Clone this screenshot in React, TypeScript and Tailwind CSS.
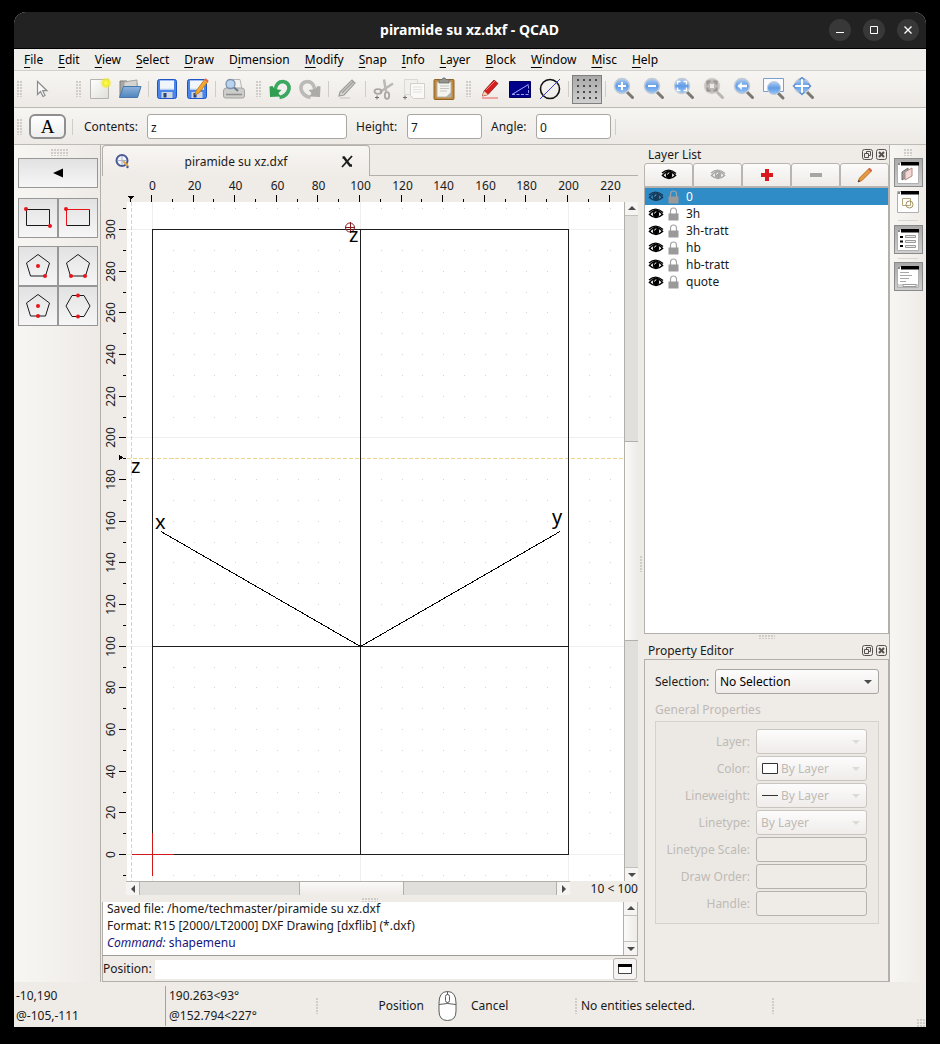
import { useState, type ReactNode } from "react";
import clsx from "clsx";

const MENUS = [
  ["", "F", "ile"],
  ["", "E", "dit"],
  ["", "V", "iew"],
  ["", "S", "elect"],
  ["", "D", "raw"],
  ["D", "i", "mension"],
  ["", "M", "odify"],
  ["", "S", "nap"],
  ["", "I", "nfo"],
  ["", "L", "ayer"],
  ["", "B", "lock"],
  ["", "W", "indow"],
  ["", "M", "isc"],
  ["", "H", "elp"],
];

const LAYERS = ["0", "3h", "3h-tratt", "hb", "hb-tratt", "quote"];

// Drawing units to pixels inside the canvas
const toX = (u: number) => Math.round(25 + u * 2.08) + 0.5;
const toY = (v: number) => Math.round(652 - v * 2.0833) + 0.5;

const range = (from: number, to: number, step: number) => {
  const out: number[] = [];
  for (let i = from; i <= to; i += step) out.push(i);
  return out;
};

export default function App() {
  return (
    <div className="flex h-screen min-h-[800px] min-w-[900px] flex-col bg-black px-3.5 pt-3 pb-[17px] font-['Noto_Sans',sans-serif] text-xs text-[#1a1a1a]">
      <Defs />
      <div className="flex min-h-0 flex-1 flex-col overflow-hidden rounded-t-xl bg-[#efebe7]">
        <TitleBar />
        <nav className="flex h-[22px] shrink-0 items-center border-b border-[#d3cfca] bg-[#f0eeea] pl-0.5">
          {MENUS.map(([pre, key, post]) => (
            <button key={pre + key + post} className="pr-[7px] pl-2 leading-5 text-black">
              {pre}
              <span className="underline underline-offset-3">{key}</span>
              {post}
            </button>
          ))}
        </nav>
        <MainToolbar />
        <OptionsToolbar />
        <div className="flex min-h-0 flex-1">
          <ToolPanel />
          <main className="flex min-w-0 flex-1 flex-col">
            <DocumentTabs />
            <DrawingArea />
            <CommandLine />
          </main>
          <div className="flex w-1.5 items-center justify-center">
            <Dots className="h-4 w-[2px]" />
          </div>
          <aside className="flex w-[245px] shrink-0 flex-col">
            <LayerList />
            <div className="flex h-[7px] shrink-0 justify-center pt-px">
              <Dots className="h-1 w-4" />
            </div>
            <PropertyEditor />
          </aside>
          <DockBar />
        </div>
        <StatusBar />
      </div>
    </div>
  );
}

function Dots({ className }: { className: string }) {
  return (
    <span
      className={clsx(
        "block bg-[radial-gradient(circle_at_1px_1px,#d0ccc7_1px,transparent_1px)] bg-[size:3px_3px]",
        className
      )}
    />
  );
}

function Handle({ first }: { first?: boolean }) {
  return (
    <span className={clsx("flex shrink-0 justify-end pr-1", first ? "w-3" : "w-4")}>
      <Dots className="h-4 w-[5px]" />
    </span>
  );
}

function Separator() {
  return (
    <span className="flex w-[7px] shrink-0 justify-center">
      <span className="h-4 w-px bg-[#d0ccc7]" />
    </span>
  );
}

function TitleBar() {
  const round = "flex h-[22px] w-[22px] items-center justify-center rounded-full bg-[#383838]";
  return (
    <header className="grid h-[37px] shrink-0 grid-cols-[1fr_auto_1fr] items-center border-b border-black bg-[#222222] pr-[7px] pl-1.5 text-white">
      <span />
      <h1 className="text-sm font-bold">piramide su xz.dxf - QCAD</h1>
      <div className="flex justify-end gap-3">
        <button aria-label="Minimize" className={round}>
          <svg width="10" height="10" stroke="white" fill="none">
            <path d="M1 7.500h8" />
          </svg>
        </button>
        <button aria-label="Maximize" className={round}>
          <svg width="10" height="10" stroke="white" fill="none">
            <path d="M1.500 1.500h7v7h-7z" />
          </svg>
        </button>
        <button aria-label="Close" className={round}>
          <svg width="10" height="10" stroke="white" strokeWidth="1.300" fill="none">
            <path d="M1.500 1.500l7 7M8.500 1.500l-7 7" />
          </svg>
        </button>
      </div>
    </header>
  );
}

// Gradients shared by the toolbar icons
function Defs() {
  return (
    <svg width="0" height="0" className="absolute">
      <defs>
        <linearGradient id="lens" x1="0" y1="0" x2="0" y2="1">
          <stop offset="0" stopColor="#b4d0f2" />
          <stop offset="0.5" stopColor="#5f9be6" />
          <stop offset="1" stopColor="#9cc6f5" />
        </linearGradient>
        <linearGradient id="folder" x1="0" y1="0" x2="0" y2="1">
          <stop offset="0" stopColor="#8fb4dc" />
          <stop offset="1" stopColor="#4f84bd" />
        </linearGradient>
        <radialGradient id="glow">
          <stop offset="0" stopColor="#ffff66" />
          <stop offset="0.5" stopColor="#f2ea2c" />
          <stop offset="1" stopColor="#f2ea2c" stopOpacity="0" />
        </radialGradient>
        <linearGradient id="paper" x1="0" y1="0" x2="1" y2="1">
          <stop offset="0" stopColor="#ffffff" />
          <stop offset="1" stopColor="#dededa" />
        </linearGradient>
      </defs>
    </svg>
  );
}

function ToolButton({
  label,
  active,
  children,
}: {
  label: string;
  active?: boolean;
  children: ReactNode;
}) {
  return (
    <button
      title={label}
      aria-label={label}
      className={clsx(
        "flex h-[29px] w-[30px] shrink-0 items-center justify-center",
        active && "border border-[#7f7f7f] bg-linear-to-b from-[#a9a9a9] to-[#cfcfcf]"
      )}
    >
      <svg width="24" height="24" viewBox="0 0 24 24" fill="none">
        {children}
      </svg>
    </button>
  );
}

function Lens({ grey, children }: { grey?: boolean; children?: ReactNode }) {
  return (
    <>
      <path d="M15 15l5.500 5.500" stroke={grey ? "#b9b6b2" : "#7b7872"} strokeWidth="3" strokeLinecap="round" />
      <circle cx="10" cy="9" r="7.500" fill={grey ? "#bdbab6" : "url(#lens)"} stroke={grey ? "#d4d1cd" : "#c3cbd6"} strokeWidth="1.500" />
      <g stroke={grey ? "#eceae7" : "white"} strokeWidth="2">
        {children}
      </g>
    </>
  );
}

function Floppy() {
  return (
    <>
      <rect x="2.500" y="2.500" width="19" height="19" rx="2" fill="#4a86ea" stroke="#1f55c4" />
      <rect x="5" y="3.500" width="14" height="9" fill="#f1f5fc" />
      <path d="M5 12h14" stroke="#cfdcf2" />
      <rect x="6.500" y="15" width="11" height="6" fill="#cfd4de" />
      <rect x="8.500" y="16" width="3" height="4.500" fill="#27437e" />
    </>
  );
}

function MainToolbar() {
  return (
    <div className="flex h-[37px] shrink-0 items-center border-b border-[#bdb9b4] bg-linear-to-b from-[#f7f5f2] to-[#edeae6]">
      <Handle first />
      <ToolButton label="Reset">
        <path d="M8.500 4.500v13l3-3 2.500 5 2-1-2.300-4.800h4.300z" fill="#fbfbfb" stroke="#8c8c8c" strokeWidth="1.200" />
      </ToolButton>
      <span className="w-[13px] shrink-0" />
      <Handle />
      <ToolButton label="New">
        <path d="M2.500 2.500h18v19h-18z" fill="url(#paper)" stroke="#b4b4ac" />
        <circle cx="18" cy="6" r="6" fill="url(#glow)" />
      </ToolButton>
      <ToolButton label="Open">
        <path d="M2 20V4h7l2 2h8v14z" fill="#a7a7a3" stroke="#7e7e7a" />
        <path d="M6 5l13-2v8H6z" fill="#d4d4d0" stroke="#a3a39f" />
        <path d="M1.500 20.500L5.500 9.500h17.500l-3.500 11z" fill="url(#folder)" stroke="#4477ad" />
      </ToolButton>
      <Separator />
      <ToolButton label="Save">
        <Floppy />
      </ToolButton>
      <ToolButton label="Save as">
        <Floppy />
        <path d="M11 14l9-12 3 2.500-9 11.500-4 2z" fill="#f6a82c" stroke="#b8741a" strokeWidth="0.800" />
        <path d="M20 2l3 2.500" stroke="#e26a5a" strokeWidth="2" />
      </ToolButton>
      <Separator />
      <ToolButton label="Print preview">
        <path d="M6 2.500h12l2 10H4z" fill="#f1f1ef" stroke="#b5b5b2" />
        <path d="M1.500 14q0-3 3-3h15q3 0 3 3v5q0 2-2 2h-17q-2 0-2-2z" fill="#cdcdcb" stroke="#a2a29f" />
        <path d="M4 17.500h16" stroke="#8e8e8b" strokeWidth="1.500" />
        <circle cx="8.500" cy="7" r="4.500" fill="#b9d3ef" stroke="#7a92b0" strokeWidth="1.300" />
        <path d="M12 10.500l4 3.500" stroke="#6c7c90" strokeWidth="2" />
      </ToolButton>
      <Handle />
      <ToolButton label="Undo">
        <path d="M7 13Q8.500 4.500 15 4.500q6.500 1 6 7.500-1.500 7-9.500 8.500" stroke="#3aa860" strokeWidth="3.600" />
        <path d="M1.500 9.500l3-0.500 2 3 7 1-3 3 2 3.500-10.500 0.500z" fill="#2f9e51" />
      </ToolButton>
      <ToolButton label="Redo">
        <path d="M17 13Q15.500 4.500 9 4.500q-6.500 1-6 7.500 1.500 7 9.500 8.500" stroke="#bcbab7" strokeWidth="3.600" />
        <path d="M22.500 9.500l-3-0.500-2 3-7 1 3 3-2 3.500 10.500 0.500z" fill="#adaba8" />
      </ToolButton>
      <Separator />
      <ToolButton label="Erase">
        <path d="M5 15L17 3l3 3L9 18l-5 1z" fill="#d8d6d3" stroke="#9f9d9a" strokeWidth="1.200" />
        <path d="M7 16L18.500 4.500" stroke="#9f9d9a" strokeWidth="1.500" />
        <path d="M5 21h10" stroke="#dad7d3" strokeWidth="2" />
      </ToolButton>
      <Separator />
      <ToolButton label="Cut">
        <path d="M12 2.500l2 12M21 6.500L8 15" stroke="#bcb9b5" strokeWidth="2.500" />
        <ellipse cx="6" cy="14.500" rx="3.500" ry="2.300" stroke="#aaa7a3" strokeWidth="1.800" />
        <ellipse cx="15" cy="18.500" rx="2.200" ry="3.300" stroke="#aaa7a3" strokeWidth="1.800" />
        <path d="M3 20.500h4M5 18.500v4" stroke="#6f6f6f" />
      </ToolButton>
      <ToolButton label="Copy">
        <path d="M2.500 2.500h13v15h-13z" fill="#f2f0ed" stroke="#dcd9d5" />
        <path d="M8.500 6.500h14v15h-11l-3-3z" fill="#faf9f7" stroke="#d3d0cc" />
        <path d="M11 10h9M11 12.500h9M11 15h9" stroke="#e4e1de" />
        <path d="M1 20.500h4M3 18.500v4" stroke="#6f6f6f" />
      </ToolButton>
      <ToolButton label="Paste">
        <rect x="2" y="2.500" width="20" height="20" rx="1" fill="#bf8a3f" stroke="#8f6424" />
        <path d="M5 5h14v15H5z" fill="#f3f3f0" stroke="#b8b8b0" />
        <path d="M8 9h9M8 11.500h9M8 14h7" stroke="#c5c5c0" />
        <path d="M14 20l5-5v5z" fill="#b0b0aa" />
        <path d="M7 2.500h3l1-1.500h2l1 1.500h3V6H7z" fill="#93938e" stroke="#6d6d68" strokeWidth="0.800" />
      </ToolButton>
      <Handle />
      <ToolButton label="Draft mode">
        <path d="M6 14L16 3l4 3.500L10 17.500 4.500 19z" fill="#d61f1f" stroke="#8e1414" strokeWidth="0.800" />
        <path d="M6 14l4 3.500L4.500 19z" fill="#f0d6b0" />
        <path d="M8 13L17 4" stroke="#ff7a70" />
        <path d="M4 21h16" stroke="#f08a8a" strokeWidth="1.500" />
      </ToolButton>
      <ToolButton label="Screen linetypes">
        <path d="M1.500 4.500h21v16h-21z" fill="#00008b" stroke="#000060" />
        <path d="M4 17.500h16.500v-10zM4 17.500L20.500 7.500" stroke="#9c9cf5" strokeDasharray="3 1.500" />
      </ToolButton>
      <ToolButton label="Antialiasing">
        <circle cx="12" cy="12" r="9.500" stroke="#111111" strokeWidth="1.600" />
        <path d="M2 22L22 2" stroke="#3a3ad0" />
      </ToolButton>
      <Separator />
      <ToolButton label="Grid" active>
        {range(2, 20, 6).map((x) =>
          range(2, 20, 6).map((y) => (
            <rect key={x + "-" + y} x={x} y={y} width="2" height="2" fill="#4a4a4a" />
          ))
        )}
      </ToolButton>
      <Separator />
      <ToolButton label="Zoom in">
        <Lens>
          <path d="M6 9h8M10 5v8" />
        </Lens>
      </ToolButton>
      <ToolButton label="Zoom out">
        <Lens>
          <path d="M6 9h8" />
        </Lens>
      </ToolButton>
      <ToolButton label="Auto zoom">
        <Lens>
          <path d="M5.500 7.500v-3h3M11.500 4.500h3v3M14.500 10.500v3h-3M8.500 13.500h-3v-3" strokeWidth="1.500" />
        </Lens>
      </ToolButton>
      <ToolButton label="Zoom to selection">
        <Lens grey>
          <path d="M5.500 7.500v-3h3M11.500 4.500h3v3M14.500 10.500v3h-3M8.500 13.500h-3v-3" stroke="#97948f" />
          <path d="M8 9h4" strokeWidth="4" />
        </Lens>
      </ToolButton>
      <ToolButton label="Previous view">
        <Lens>
          <path d="M9 9h6" strokeWidth="2.500" />
          <path d="M9.500 5.500v7L5.500 9z" fill="white" strokeWidth="0.500" />
        </Lens>
      </ToolButton>
      <ToolButton label="Window zoom">
        <path d="M1.500 1.500h20v13h-20z" fill="#fbfbfd" stroke="#7c9ed0" />
        <path d="M16 16l5 5" stroke="#7b7872" strokeWidth="3" strokeLinecap="round" />
        <circle cx="12" cy="11" r="6.500" fill="url(#lens)" stroke="#c3cbd6" />
      </ToolButton>
      <ToolButton label="Pan">
        <Lens>
          <path d="M3 9h14M10 2v14" strokeWidth="2" />
          <path d="M7.500 3L10 0.500 12.500 3M7.500 15l2.500 2.500 2.500-2.500M4 6.500L1.500 9 4 11.500M16 6.500L18.500 9 16 11.500" stroke="#5e8fd6" strokeWidth="1.500" />
        </Lens>
      </ToolButton>
    </div>
  );
}

function OptionsToolbar() {
  const field = "h-[25px] rounded-[3px] border border-[#a9a5a0] bg-white px-[3px] pt-px text-xs";
  return (
    <div className="flex h-[37px] shrink-0 items-center border-b border-[#bdb9b4] bg-linear-to-b from-[#f7f5f2] to-[#edeae6] pt-px">
      <Handle first />
      <button
        aria-label="Text"
        className="ml-[3px] h-[25px] w-[37px] rounded-md border-2 border-[#8f8f8f] bg-linear-to-b from-white to-[#eeeeee] font-['Liberation_Serif',serif] text-[19px] leading-5 text-black"
      >
        A
      </button>
      <span className="mx-1.5 h-4 w-px bg-[#d0ccc7]" />
      <label htmlFor="contents" className="ml-[5px] w-[63px]">
        Contents:
      </label>
      <input id="contents" defaultValue="z" className={clsx(field, "w-[200px]")} />
      <label htmlFor="height" className="ml-[9px] w-[51px]">
        Height:
      </label>
      <input id="height" defaultValue="7" className={clsx(field, "w-[75px]")} />
      <label htmlFor="angle" className="ml-[9px] w-[45px]">
        Angle:
      </label>
      <input id="angle" defaultValue="0" className={clsx(field, "w-[75px]")} />
      <span className="ml-1 h-4 w-px bg-[#d0ccc7]" />
    </div>
  );
}

function ShapeButton({ label, children }: { label: string; children: ReactNode }) {
  return (
    <button
      title={label}
      aria-label={label}
      className="flex h-10 w-10 items-center justify-center border border-[#979797] bg-linear-to-b from-[#e2e2e2] to-[#f6f6f6]"
    >
      <svg width="32" height="32" viewBox="0 0 32 32" fill="none" stroke="#1a1a1a">
        {children}
      </svg>
    </button>
  );
}

function Red({ x, y }: { x: number; y: number }) {
  return <circle cx={x} cy={y} r="2" fill="#e8141c" stroke="none" />;
}

const PENTAGON = "M16 4.500L27.500 13l-4 13h-15l-4-13z";

function ToolPanel() {
  return (
    <aside className="flex w-[87px] shrink-0 flex-col border-r border-[#b3afaa] bg-linear-to-r from-[#f8f6f3] to-[#eeebe7] pl-1">
      <div className="flex h-[13px] justify-center pt-1">
        <Dots className="h-[7px] w-[17px]" />
      </div>
      <button
        aria-label="Back"
        className="flex h-[30px] w-20 items-center justify-center border border-[#979797] bg-linear-to-b from-[#e2e2e2] to-[#f6f6f6]"
      >
        <svg width="10" height="10" fill="black">
          <path d="M0 5l10-4.500v9z" />
        </svg>
      </button>
      <div className="mt-2.5 flex">
        <ShapeButton label="Rectangle from two corners">
          <path d="M4.500 7.500h23v16h-23z" />
          <Red x={4} y={7} />
          <Red x={28} y={24} />
        </ShapeButton>
        <ShapeButton label="Rectangle with size">
          <path d="M27.500 7.500v16h-23" />
          <path d="M4.500 23.500v-16h23" stroke="#e8141c" />
          <Red x={4} y={7} />
        </ShapeButton>
      </div>
      <div className="mt-2 grid w-20 grid-cols-2">
        <ShapeButton label="Polygon from centre and corner">
          <path d={PENTAGON} />
          <Red x={16} y={16} />
          <Red x={23} y={26} />
        </ShapeButton>
        <ShapeButton label="Polygon from two corners">
          <path d={PENTAGON} />
          <Red x={9} y={26} />
          <Red x={23} y={26} />
        </ShapeButton>
        <ShapeButton label="Polygon from centre and side">
          <path d={PENTAGON} />
          <Red x={16} y={16} />
          <Red x={16} y={26} />
        </ShapeButton>
        <ShapeButton label="Polygon from side to side">
          <path d="M10 5.500h12l6 10.500-6 10.500H10L4 16z" />
          <Red x={16} y={5.5} />
          <Red x={16} y={26.5} />
        </ShapeButton>
      </div>
    </aside>
  );
}

function DocumentTabs() {
  return (
    <div className="flex h-[31px] shrink-0 pl-px">
      <div className="flex w-[268px] items-center rounded-t-sm border border-b-0 border-[#b3afaa] bg-linear-to-b from-[#f8f6f3] to-[#efebe7] pr-4 pl-3">
        <svg width="16" height="16" fill="none">
          <circle cx="7" cy="7.500" r="5.500" fill="#f3f4fa" stroke="#4c5a94" strokeWidth="2" />
          <path d="M7 3v9M3 7.500h8" stroke="#a9b3d3" />
          <path d="M8 8l5 5" stroke="#e0a63c" strokeWidth="2" />
          <path d="M11.500 13.500l2 1" stroke="#4c5a94" strokeWidth="2" />
        </svg>
        <span className="flex-1 pt-px text-center">piramide su xz.dxf</span>
        <button aria-label="Close tab">
          <svg width="12" height="13" fill="none" stroke="#1c1c1c">
            <path d="M1.500 2.500h1.500l6 8h2" strokeWidth="2.400" />
            <path d="M11 1L1 12" strokeWidth="1.800" />
          </svg>
        </button>
      </div>
      <div className="flex-1 border-b border-[#b3afaa]" />
    </div>
  );
}

function Arrow({ dir }: { dir: "up" | "down" | "left" | "right" }) {
  const paths = {
    up: "M1 6l4-4 4 4z",
    down: "M1 3l4 4 4-4z",
    left: "M7 1L3 5l4 4z",
    right: "M3 1l4 4-4 4z",
  };
  return (
    <svg width="10" height="10" fill="#4a4a4a">
      <path d={paths[dir]} />
    </svg>
  );
}

function DrawingArea() {
  return (
    <div className="grid min-h-0 flex-1 grid-cols-[25px_1fr_14px] grid-rows-[26px_1fr_14px] pl-px">
      <svg className="col-span-3 h-full w-full" shapeRendering="crispEdges" fill="#1a1a1a">
        {range(0, 220, 20).map((u) => (
          <text key={u} x={toX(u) + 25} y="14" textAnchor="middle">
            {u}
          </text>
        ))}
        {range(-10, 220, 10).map((u) => (
          <path key={u} d={`M${toX(u) + 24} 26v${u % 20 === 0 ? -7 : -3}`} stroke="black" />
        ))}
        <path d="M26 20h6l-3 4z" fill="black" />
      </svg>

      <svg className="h-full w-full" shapeRendering="crispEdges" fill="#1a1a1a">
        {range(0, 300, 20).map((v) => (
          <text key={v} transform={`translate(13 ${toY(v)}) rotate(-90)`} textAnchor="middle">
            {v}
          </text>
        ))}
        {range(-10, 310, 10).map((v) => (
          <path key={v} d={`M24 ${toY(v)}h${v % 20 === 0 ? -7 : -3}`} stroke="black" />
        ))}
        <path d={`M17 ${toY(190) - 4}v6l4-3z`} fill="black" />
      </svg>

      <svg className="h-full w-full bg-white" fill="none">
        <g shapeRendering="crispEdges">
          {range(0, 220, 10).map((u) =>
            range(-10, 310, 10).map((v) => (
              <rect key={u + ":" + v} x={toX(u) - 0.5} y={toY(v) - 0.5} width="1" height="1" fill="#d4d4d4" />
            ))
          )}
          {[0, 100, 200].map((u) => (
            <path key={u} d={`M${toX(u)} 0v2000`} stroke="#efefef" />
          ))}
          {[0, 100, 200, 300].map((v) => (
            <path key={v} d={`M0 ${toY(v)}h3000`} stroke="#efefef" />
          ))}
          <path d={`M${toX(-10)} 0v2000M0 ${toY(190)}h3000`} stroke="#ead588" strokeDasharray="4 2" />
          <path d={`M${toX(0)} ${toY(0)}V${toY(300)}H${toX(200)}V${toY(0)}z`} stroke="#1e1e1e" />
          <path d={`M${toX(100)} ${toY(0)}V${toY(300)}M${toX(0)} ${toY(100)}H${toX(200)}`} stroke="#1e1e1e" />
          <path d={`M34 ${toY(155)}L${toX(100)} ${toY(100)}L433 ${toY(155)}`} stroke="black" />
          <path d={`M${toX(-10)} ${toY(0)}h42M${toX(0)} ${toY(0) - 22}v43`} stroke="#d01818" />
        </g>
        <g stroke="#8c1c1c">
          <circle cx="223" cy="25.500" r="4.500" />
          <path d="M218 25.500h10M223.500 20v11" shapeRendering="crispEdges" />
        </g>
        <g fill="black" fontSize="20">
          <text x="222" y="40">z</text>
          <text x="4" y="271">z</text>
          <text x="28" y="327">x</text>
          <text x="425" y="322">y</text>
        </g>
      </svg>

      <div className="flex flex-col border-l border-[#b3afaa] bg-[#e1dfdc]">
        <button aria-label="Scroll up" className="flex h-[14px] items-center justify-center border-b border-[#c4c0bb] bg-[#f6f4f2]">
          <Arrow dir="up" />
        </button>
        <div className="flex-[226]" />
        <div className="flex-[198] border-y border-[#b3afaa] bg-linear-to-r from-[#fbfaf9] to-[#eeebe8]" />
        <div className="flex-[227]" />
        <button aria-label="Scroll down" className="flex h-[14px] items-center justify-center border-t border-[#c4c0bb] bg-[#f6f4f2]">
          <Arrow dir="down" />
        </button>
      </div>

      <div className="col-span-3 flex pl-6">
        <div className="flex flex-1 border-t border-[#b3afaa] bg-[#e1dfdc]">
          <button aria-label="Scroll left" className="flex w-[14px] items-center justify-center border-r border-[#b3afaa] bg-[#f6f4f2]">
            <Arrow dir="left" />
          </button>
          <div className="flex-[160]" />
          <div className="flex-[103] border-x border-[#b3afaa] bg-linear-to-b from-[#fbfaf9] to-[#eeebe8]" />
          <div className="flex-[153]" />
          <button aria-label="Scroll right" className="flex w-[14px] items-center justify-center border-l border-[#b3afaa] bg-[#f6f4f2]">
            <Arrow dir="right" />
          </button>
        </div>
        <span className="w-[68px] text-right leading-4 whitespace-nowrap">10 &lt; 100</span>
      </div>
    </div>
  );
}

function CommandLine() {
  return (
    <section className="shrink-0 pl-px">
      <div className="flex h-[7px] justify-center pt-[3px]">
        <Dots className="h-1 w-4" />
      </div>
      <div className="flex h-[54px] border-b border-[#a09c97] bg-white">
        <div className="flex flex-1 flex-col justify-end border-l border-[#b3afaa] pb-1 pl-1 leading-[17px]">
          <p>Saved file: /home/techmaster/piramide su xz.dxf</p>
          <p>Format: R15 [2000/LT2000] DXF Drawing [dxflib] (*.dxf)</p>
          <p className="text-[#14147c]">
            <i>Command:</i> shapemenu
          </p>
        </div>
        <div className="flex w-[15px] flex-col border-x border-[#b3afaa] bg-[#f6f4f2]">
          <button aria-label="Scroll up" className="flex h-[14px] items-center justify-center border-b border-[#c4c0bb]">
            <Arrow dir="up" />
          </button>
          <div className="flex-1 bg-linear-to-r from-[#fbfaf9] to-[#eeebe8]" />
          <button aria-label="Scroll down" className="flex h-[14px] items-center justify-center border-t border-[#c4c0bb]">
            <Arrow dir="down" />
          </button>
        </div>
      </div>
      <div className="flex h-[26px] items-center border-b border-l border-[#b3afaa] pt-px pr-px">
        <label htmlFor="command" className="w-[52px]">
          Position:
        </label>
        <input id="command" className="h-[19px] min-w-0 flex-1 bg-white" />
        <button aria-label="Toggle history" className="flex h-[22px] w-6 items-center justify-center rounded-[3px] border border-[#b3afaa] bg-[#f6f4f2]">
          <svg width="14" height="10">
            <path d="M0.500 0.500h13v9h-13z" fill="white" stroke="#444444" />
            <path d="M0 0h14v3H0z" fill="black" />
          </svg>
        </button>
      </div>
    </section>
  );
}

function DockTitle({ children }: { children: ReactNode }) {
  return (
    <div className="flex h-[18px] shrink-0 items-center gap-[3px] pt-px pr-0.5 pl-1">
      <h2 className="flex-1">{children}</h2>
      <button aria-label="Float">
        <svg width="11" height="11" fill="none" stroke="#55524e">
          <rect x="0.500" y="0.500" width="10" height="10" rx="2" />
          <path d="M4.500 4.500v-2h4v4h-2M2.500 4.500h4v4h-4z" />
        </svg>
      </button>
      <button aria-label="Close">
        <svg width="11" height="11" fill="none" stroke="#55524e">
          <rect x="0.500" y="0.500" width="10" height="10" rx="2" />
          <path d="M3 3l5 5M8 3L3 8" strokeWidth="2" />
        </svg>
      </button>
    </div>
  );
}

function Eye({ color = "#000000", shine = "white" }: { color?: string; shine?: string }) {
  return (
    <svg width="16" height="12" viewBox="0 0 16 12" fill="none">
      <path d="M1.500 6.500Q8-1.500 14.500 6.500 8 12.500 1.500 6.500z" stroke={color} strokeWidth="1.600" />
      <path d="M1 4Q8-2 15 4.500" stroke={color} strokeWidth="1.400" />
      <circle cx="8" cy="6" r="3.200" fill={color} />
      <path d="M6.500 5.500q0.300-1.500 1.800-1.700" stroke={shine} />
    </svg>
  );
}

function Lock() {
  return (
    <svg width="11" height="14" viewBox="0 0 11 14" fill="none">
      <path d="M2.500 7V4.500a3 3.500 0 0 1 6 0V7" stroke="#a3a3a3" strokeWidth="1.200" />
      <rect x="0.500" y="6.500" width="10" height="7" fill="#9a9a9a" />
    </svg>
  );
}

function LayerList() {
  const [selected, setSelected] = useState("0");
  const button =
    "flex flex-1 items-center justify-center rounded-t-[3px] border border-[#b9b5b0] bg-linear-to-b from-[#fcfbfa] to-[#eeebe8]";
  return (
    <section className="flex min-h-0 flex-1 flex-col">
      <DockTitle>Layer List</DockTitle>
      <div className="flex h-6 shrink-0">
        <button aria-label="Show all layers" className={button}>
          <Eye />
        </button>
        <button aria-label="Hide all layers" className={button}>
          <Eye color="#a8a8a8" />
        </button>
        <button aria-label="Add layer" className={button}>
          <svg width="12" height="12">
            <path d="M4 0h4v4h4v4H8v4H4V8H0V4h4z" fill="#d8181c" />
          </svg>
        </button>
        <button aria-label="Remove layer" className={button}>
          <svg width="12" height="4">
            <path d="M0 0h12v4H0z" fill="#a5a5a5" />
          </svg>
        </button>
        <button aria-label="Edit layer" className={button}>
          <svg width="16" height="16">
            <path d="M2.500 11L12 1.500l2.500 2.500L5 13.500l-4 1.500z" fill="#e79a3c" stroke="#a8601c" strokeWidth="0.800" />
            <path d="M12 1.500l2.500 2.500" stroke="#d85a50" strokeWidth="2" />
            <path d="M1 15l2-0.700-1.300-1.300z" fill="#222222" />
          </svg>
        </button>
      </div>
      <ul className="flex-1 border border-[#b3afaa] bg-white">
        {LAYERS.map((name) => (
          <li
            key={name}
            onClick={() => setSelected(name)}
            className={clsx(
              "flex h-[17px] items-center pl-[3px]",
              selected === name ? "bg-[#308cc6] text-white" : "text-[#1a1a1a]"
            )}
          >
            {selected === name ? <Eye color="#173a58" shine="#6fb0dc" /> : <Eye />}
            <span className="mr-[7px] ml-1">
              <Lock />
            </span>
            {name}
          </li>
        ))}
      </ul>
    </section>
  );
}

function Combo({
  id,
  value,
  icon,
  disabled,
  className,
}: {
  id: string;
  value: string;
  icon?: ReactNode;
  disabled?: boolean;
  className?: string;
}) {
  return (
    <div
      className={clsx(
        "flex h-[25px] items-center gap-[3px] rounded-[3px] border bg-linear-to-b from-[#fdfcfc] to-[#efecea] pr-1.5 pl-1",
        disabled ? "border-[#c9c5c0]" : "border-[#a9a5a0]",
        className
      )}
    >
      {icon}
      <select
        id={id}
        disabled={disabled}
        className={clsx("min-w-0 flex-1 appearance-none bg-transparent", disabled ? "text-[#bebab5] opacity-100" : "text-black")}
      >
        <option>{value}</option>
      </select>
      <svg width="8" height="4" fill={disabled ? "#dedad6" : "#4a4a4a"}>
        <path d="M0 0h8L4 4z" />
      </svg>
    </div>
  );
}

function PropertyEditor() {
  const box = "h-[25px] rounded-[3px] border border-[#b5b1ac] bg-[#efebe7] px-1";
  return (
    <section className="shrink-0">
      <DockTitle>Property Editor</DockTitle>
      <div className="h-[323px] border border-[#b3afaa] pt-[9px] pr-[9px] pl-2.5">
        <div className="flex items-center">
          <label htmlFor="selection" className="w-[60px]">
            Selection:
          </label>
          <Combo id="selection" value="No Selection" className="flex-1" />
        </div>
        <h3 className="mt-2 leading-4 text-[#bebab5]">General Properties</h3>
        <div className="mt-[3px] grid grid-cols-[1fr_111px] items-center gap-x-1.5 gap-y-0.5 border border-[#d5d1cc] bg-[#ece9e5] py-[7px] pr-[11px] text-right text-[#bebab5]">
          <label htmlFor="layer">Layer:</label>
          <Combo id="layer" value="" disabled />
          <label htmlFor="color">Color:</label>
          <Combo
            id="color"
            value="By Layer"
            disabled
            icon={
              <svg width="17" height="11">
                <path d="M1.500 0.500h15v10h-15z" fill="white" stroke="#333333" />
              </svg>
            }
          />
          <label htmlFor="lineweight">Lineweight:</label>
          <Combo
            id="lineweight"
            value="By Layer"
            disabled
            icon={
              <svg width="17" height="11">
                <path d="M1 5.500h16" stroke="#333333" />
              </svg>
            }
          />
          <label htmlFor="linetype">Linetype:</label>
          <Combo id="linetype" value="By Layer" disabled />
          <label htmlFor="scale">Linetype Scale:</label>
          <input id="scale" disabled className={box} />
          <label htmlFor="order">Draw Order:</label>
          <input id="order" disabled className={box} />
          <label htmlFor="handle">Handle:</label>
          <input id="handle" disabled className={box} />
        </div>
      </div>
    </section>
  );
}

function DockButton({ label, active, children }: { label: string; active?: boolean; children: ReactNode }) {
  return (
    <button
      title={label}
      aria-label={label}
      className={clsx(
        "flex h-[29px] w-[29px] items-center justify-center",
        active && "border border-[#8a8a8a] bg-linear-to-b from-[#a9a9a9] to-[#cfcfcf]"
      )}
    >
      <svg width="22" height="22" fill="none">
        <path d="M0.500 0.500h21v21h-21z" fill="white" stroke="#b0b0b0" />
        <path d="M4 0h18v3.500H4z" fill="black" />
        <path d="M1 1h2v2H1z" fill="#888888" />
        {children}
      </svg>
    </button>
  );
}

function DockBar() {
  return (
    <aside className="flex w-[37px] shrink-0 flex-col items-center border-l border-[#b3afaa] bg-linear-to-r from-[#f8f6f3] to-[#eeebe7]">
      <div className="flex h-[13px] justify-center pt-1">
        <Dots className="h-[7px] w-2" />
      </div>
      <DockButton label="Layer list" active>
        <path d="M5 10l6-4v8l-6 4z" fill="#9c9c9c" stroke="#6e6e6e" />
        <path d="M8 10l7-4v8l-7 4z" fill="#f3d9d6" stroke="#b58680" />
      </DockButton>
      <DockButton label="Block list">
        <path d="M5.500 7.500h8v7h-8z" stroke="#b3a578" />
        <circle cx="12.500" cy="13.500" r="3.500" stroke="#a08f58" />
      </DockButton>
      <span className="my-1 h-px w-5 bg-[#d9d5d0]" />
      <DockButton label="Property editor" active>
        <path d="M3 7h3v2H3zM3 11.500h3v2H3zM3 16h3v2H3z" fill="black" />
        <path d="M8.500 6.500h10v2h-10zM8.500 11.500h10v2h-10zM8.500 16.500h10v2h-10z" fill="#eeeeee" stroke="#999999" />
      </DockButton>
      <span className="mt-1 mb-[3px] h-px w-5 bg-[#d9d5d0]" />
      <DockButton label="Command line" active>
        <path d="M3 6.500h9M3 9.500h12M3 12.500h9M3 15.500h6" stroke="#a8a8a8" />
        <path d="M1 18h20v3H1z" fill="#d5d5d5" />
        <path d="M6 18.500h13v2H6z" fill="white" stroke="#999999" />
      </DockButton>
    </aside>
  );
}

function StatusBar() {
  return (
    <footer className="flex h-[45px] shrink-0 items-center pt-0.5 leading-5">
      <div className="w-[151px] pl-0.5">
        <p>-10,190</p>
        <p>@-105,-111</p>
      </div>
      <div className="w-[151px] border-l border-[#a5a19c] pl-[3px]">
        <p>190.263&lt;93°</p>
        <p>@152.794&lt;227°</p>
      </div>
      <Dots className="h-4 w-[2px]" />
      <div className="flex w-[257px] items-center">
        <span className="w-[106px] text-right">Position</span>
        <svg width="19" height="32" viewBox="0 0 19 32" fill="white" stroke="#5d5d5d" className="mx-3.5">
          <path d="M1 13Q1 1.500 9.500 1.500T18 13v8q0 9.500-8.500 9.500T1 21z" />
          <path d="M1 14.500q8.500-2 17 0M9.500 1.500v12" fill="none" />
          <rect x="7.500" y="4.500" width="4" height="8" rx="2" />
        </svg>
        <span>Cancel</span>
      </div>
      <Dots className="h-4 w-[2px]" />
      <span className="w-[195px] pl-1">No entities selected.</span>
      <Dots className="h-4 w-[2px]" />
      <span className="flex-1" />
      <Dots className="mr-px h-2 w-2 self-end" />
    </footer>
  );
}
